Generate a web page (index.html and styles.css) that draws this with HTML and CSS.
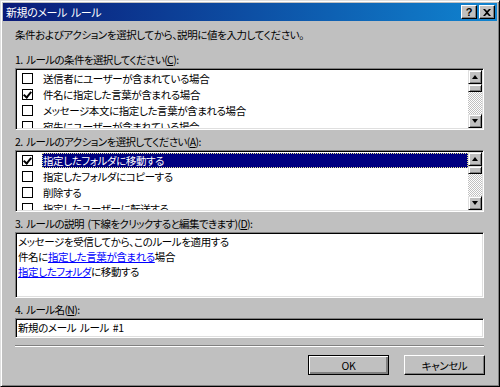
FILE: index.html
```html
<!DOCTYPE html>
<html lang="ja">
<head>
    <meta charset="UTF-8">
    <title>新規のメール ルール</title>
    <link rel="stylesheet" href="styles.css">
</head>
<body>

    <div class="window">
        <!-- Caption -->
        <div class="titlebar">
            <span class="title">新規のメール ルール</span>
            <div class="caption-btns">
                <div class="cap-btn help">?</div>
                <div class="cap-btn close">
                    <svg width="8" height="7" viewBox="0 0 8 7"><path d="M0 0h2l2 2 2-2h2L5 3.5 8 7H6L4 5 2 7H0l3-3.5z" fill="#000"/></svg>
                </div>
            </div>
        </div>

        <div class="content">
            <p class="intro">条件およびアクションを選択してから、説明に値を入力してください。</p>

            <!-- 1. conditions -->
            <div class="label">1. ルールの条件を選択してください(<u>C</u>):</div>
            <div class="listbox">
                <div class="rows">
                    <div class="row"><span class="check"></span><span class="text">送信者にユーザーが含まれている場合</span></div>
                    <div class="row"><span class="check checked"></span><span class="text">件名に指定した言葉が含まれる場合</span></div>
                    <div class="row"><span class="check"></span><span class="text">メッセージ本文に指定した言葉が含まれる場合</span></div>
                    <div class="row"><span class="check"></span><span class="text">宛先にユーザーが含まれている場合</span></div>
                </div>
                <div class="vscroll">
                    <div class="sb-btn"><span class="arrow-up"></span></div>
                    <div class="sb-thumb"></div>
                    <div class="sb-track"></div>
                    <div class="sb-btn"><span class="arrow-down"></span></div>
                </div>
            </div>

            <!-- 2. actions -->
            <div class="label">2. ルールのアクションを選択してください(<u>A</u>):</div>
            <div class="listbox">
                <div class="rows">
                    <div class="row"><span class="check checked"></span><span class="text selected">指定したフォルダに移動する</span></div>
                    <div class="row"><span class="check"></span><span class="text">指定したフォルダにコピーする</span></div>
                    <div class="row"><span class="check"></span><span class="text">削除する</span></div>
                    <div class="row"><span class="check"></span><span class="text">指定したユーザーに転送する</span></div>
                </div>
                <div class="vscroll">
                    <div class="sb-btn"><span class="arrow-up"></span></div>
                    <div class="sb-thumb"></div>
                    <div class="sb-track"></div>
                    <div class="sb-btn"><span class="arrow-down"></span></div>
                </div>
            </div>

            <!-- 3. description -->
            <div class="label">3. ルールの説明 (下線をクリックすると編集できます)(<u>D</u>):</div>
            <div class="desc">
                <div>メッセージを受信してから、このルールを適用する</div>
                <div>件名に<a href="#">指定した言葉が含まれる</a>場合</div>
                <div><a href="#">指定したフォルダ</a>に移動する</div>
            </div>

            <!-- 4. name -->
            <div class="label">4. ルール名(<u>N</u>):</div>
            <div class="textbox">新規のメール ルール #1</div>

            <div class="separator"></div>

            <div class="buttons">
                <div class="btn default">OK</div>
                <div class="btn">キャンセル</div>
            </div>
        </div>
    </div>

</body>
</html>
```

FILE: styles.css
```css
/* Base */
* {
    box-sizing: border-box;
    margin: 0;
    padding: 0;
}

body {
    font-family: "Noto Sans CJK JP", "Liberation Sans", sans-serif;
    font-size: 10.5px;
    letter-spacing: -0.4px;
    word-spacing: 2px;
    font-feature-settings: "palt";
    color: #000;
    background: #c0c0c0;
}

/* Window frame */
.window {
    width: 500px;
    height: 387px;
    background: #c0c0c0;
    border: 1px solid;
    border-color: #dfdfdf #000 #000 #dfdfdf;
    box-shadow: inset 1px 1px #fff, inset -1px -1px #808080;
    padding: 2px;
}

.titlebar {
    height: 18px;
    display: flex;
    align-items: center;
    justify-content: space-between;
    padding: 0 2px 0 3px;
    background: linear-gradient(to right, #0a1a78, #1084d0);
    color: #fff;
}

.title {
    font-size: 11px;
    line-height: 18px;
}

.caption-btns {
    display: flex;
    gap: 2px;
}

.cap-btn {
    width: 16px;
    height: 14px;
    background: #c0c0c0;
    border: 1px solid;
    border-color: #fff #000 #000 #fff;
    box-shadow: inset -1px -1px #808080;
    display: flex;
    align-items: center;
    justify-content: center;
    color: #000;
}

.cap-btn.help {
    font-family: "Liberation Sans", sans-serif;
    font-weight: bold;
    font-size: 11px;
    letter-spacing: 0;
    line-height: 12px;
}

/* Content */
.content {
    padding: 0 0 0 12px;
}

.intro {
    margin-top: 6px;
    line-height: 16px;
    margin-bottom: 10px;
}

.label {
    line-height: 14px;
    margin-top: 5px;
    margin-bottom: 1px;
    letter-spacing: -0.6px;
}

.intro + .label {
    margin-top: 0;
}

/* Sunken list box */
.listbox {
    width: 469px;
    height: 62px;
    background: #fff;
    border: 1px solid;
    border-color: #808080 #fff #fff #808080;
    box-shadow: inset 1px 1px #000, inset -1px -1px #dfdfdf;
    padding: 1px;
    display: flex;
    overflow: hidden;
}

.rows {
    flex: 1;
    overflow: hidden;
}

.row {
    height: 16px;
    display: flex;
    align-items: center;
}

.check {
    width: 11px;
    height: 11px;
    border: 1px solid #000;
    margin: 0 9px 0 5px;
    flex-shrink: 0;
    background: #fff;
    position: relative;
}

.check.checked::after {
    content: '';
    position: absolute;
    left: 2px;
    top: 0px;
    width: 3px;
    height: 6px;
    border: solid #000;
    border-width: 0 2px 2px 0;
    transform: rotate(40deg);
}

.text {
    flex: 1;
    line-height: 15px;
    padding-left: 1px;
    white-space: nowrap;
}

.text.selected {
    background: #000080;
    color: #fff;
    outline: 1px dotted #e8e890;
    outline-offset: -1px;
}

/* Scrollbar */
.vscroll {
    width: 14px;
    display: flex;
    flex-direction: column;
}

.sb-btn {
    height: 14px;
    background: #c0c0c0;
    border: 1px solid;
    border-color: #dfdfdf #000 #000 #dfdfdf;
    box-shadow: inset 1px 1px #fff, inset -1px -1px #808080;
    display: flex;
    align-items: center;
    justify-content: center;
}

.sb-thumb {
    height: 8px;
    background: #c0c0c0;
    border: 1px solid;
    border-color: #dfdfdf #000 #000 #dfdfdf;
    box-shadow: inset 1px 1px #fff, inset -1px -1px #808080;
}

.sb-track {
    flex: 1;
    background: repeating-conic-gradient(#fff 0 25%, #c0c0c0 0 50%) 0 0 / 2px 2px;
}

.arrow-up,
.arrow-down {
    width: 0;
    height: 0;
    border-left: 3px solid transparent;
    border-right: 3px solid transparent;
}

.arrow-up {
    border-bottom: 4px solid #000;
}

.arrow-down {
    border-top: 4px solid #000;
}

/* Description box */
.desc {
    width: 469px;
    height: 66px;
    background: #fff;
    border: 1px solid;
    border-color: #808080 #fff #fff #808080;
    box-shadow: inset 1px 1px #000, inset -1px -1px #dfdfdf;
    padding: 1px 2px;
    line-height: 15px;
}

.desc a {
    color: #0000ff;
}

/* Name field */
.textbox {
    width: 469px;
    height: 20px;
    background: #fff;
    border: 1px solid;
    border-color: #808080 #fff #fff #808080;
    box-shadow: inset 1px 1px #000, inset -1px -1px #dfdfdf;
    padding: 0 2px;
    line-height: 18px;
}

.separator {
    width: 469px;
    height: 2px;
    margin-top: 7px;
    border-top: 1px solid #808080;
    border-bottom: 1px solid #fff;
}

/* Buttons */
.buttons {
    width: 470px;
    margin-top: 8px;
    display: flex;
    justify-content: flex-end;
    gap: 15px;
}

.btn {
    width: 81px;
    height: 20px;
    background: #c0c0c0;
    border: 1px solid;
    border-color: #fff #000 #000 #fff;
    box-shadow: inset -1px -1px #808080;
    display: flex;
    align-items: center;
    justify-content: center;
}

.btn.default {
    border: 1px solid #000;
    box-shadow: inset 1px 1px #fff, inset -2px -2px #808080, inset -1px -1px #000;
}
```
